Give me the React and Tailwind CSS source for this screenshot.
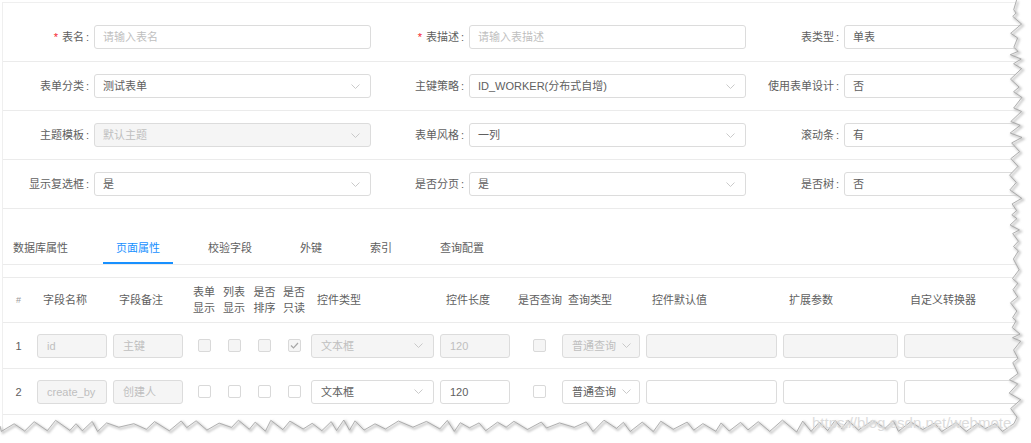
import React from "react";

const Chevron = () => (
  <svg width="9" height="5" viewBox="0 0 9 5" className="shrink-0">
    <path d="M0.5 0.5 L4.5 4.5 L8.5 0.5" fill="none" stroke="#c4c4c4" strokeWidth="0.9" />
  </svg>
);

function Field({ label, required, value, placeholder, select, disabled }) {
  return (
    <div className="flex items-center w-[375px] shrink-0">
      <div className="w-[91px] shrink-0 text-right pr-[5px] text-[#606060] whitespace-nowrap">
        {required && <span className="text-[#f5222d] mr-[4px]">*</span>}
        {label}
        <span className="ml-[2px]">:</span>
      </div>
      <div
        className={`w-[277px] shrink-0 h-[24px] rounded-[3px] border border-[#dcdcdc] flex items-center pl-[8px] pr-[10px] ${
          disabled ? "bg-[#f5f5f5]" : "bg-white"
        }`}
      >
        <span
          className={`flex-1 whitespace-nowrap ${
            value ? (disabled ? "text-[#bfbfbf]" : "text-[#606060]") : "text-[#bfbfbf]"
          }`}
        >
          {value || placeholder}
        </span>
        {select && <Chevron />}
      </div>
    </div>
  );
}

function Input({ w, value, disabled, select, pr }) {
  return (
    <div
      className={`h-[24px] shrink-0 rounded-[3px] border border-[#dcdcdc] flex items-center gap-[4px] pl-[9px] ${pr || (select ? "pr-[10px]" : "pr-[3px]")} ${
        disabled ? "bg-[#f5f5f5] text-[#bfbfbf]" : "bg-white text-[#606060]"
      } ${w}`}
    >
      <span className="flex-1 whitespace-nowrap overflow-hidden">{value}</span>
      {select && <Chevron />}
    </div>
  );
}

function Check({ disabled, checked }) {
  return (
    <div
      className={`w-[13px] h-[13px] rounded-[2px] border border-[#d9d9d9] flex items-center justify-center ${
        disabled ? "bg-[#f5f5f5]" : "bg-white"
      }`}
    >
      {checked && (
        <svg width="9" height="7" viewBox="0 0 9 7">
          <path d="M1 3.5 L3.5 6 L8 1" fill="none" stroke="#a6a6a6" strokeWidth="1.2" />
        </svg>
      )}
    </div>
  );
}

const cols = [
  "w-[31px]",
  "w-[76px] px-[3px]",
  "w-[76px] px-[3px]",
  "w-[33px] pl-[3px]",
  "w-[30px]",
  "w-[31px]",
  "w-[28px]",
  "w-[129px] px-[3px]",
  "w-[76px] px-[3px]",
  "w-[46px]",
  "w-[84px] px-[3px]",
  "w-[137px] px-[3px]",
  "w-[121px] px-[3px]",
  "w-[170px] px-[3px]",
];

function Row({ cells, header }) {
  return (
    <div
      className={`flex items-center border-b border-[#ebebeb] ${header ? "h-[45px]" : "h-[46px]"}`}
    >
      {cells.map((c, i) => (
        <div key={i} className={`shrink-0 flex items-center h-full ${cols[i]}`}>
          {c}
        </div>
      ))}
    </div>
  );
}

function H({ children, center }) {
  return (
    <div
      className={`w-full text-[#606060] whitespace-nowrap leading-[16px] ${
        center ? "text-center" : "pl-[6px]"
      }`}
    >
      {children}
    </div>
  );
}

function rng(seed) {
  let s = seed;
  return () => {
    s = (s * 16807) % 2147483647;
    return (s - 1) / 2147483646;
  };
}

function TornEdge() {
  const r = rng(12345);
  const right = [];
  let y = 0;
  let flip = false;
  while (y < 420) {
    flip = !flip;
    right.push([flip ? 1016 + r() * 6 : 1009 + r() * 5, y]);
    y += 3 + r() * 8;
  }
  const bottom = [];
  let x = 1014;
  flip = false;
  while (x > 0) {
    flip = !flip;
    bottom.push([x, flip ? 420 + r() * 4 : 427 + r() * 5]);
    x -= 5 + r() * 10;
  }
  bottom.push([0, 426]);
  const all = [...right, ...bottom];
  const line = all.map((p) => `${p[0].toFixed(1)},${p[1].toFixed(1)}`).join(" ");
  const poly = `1031,0 ${line} 0,443 1031,443`;
  return (
    <svg
      className="absolute inset-0 pointer-events-none"
      width="1031"
      height="443"
      viewBox="0 0 1031 443"
    >
      <defs>
        <filter id="blur" x="-5%" y="-5%" width="110%" height="110%">
          <feGaussianBlur stdDeviation="1.2" />
        </filter>
      </defs>
      <polygon points={poly} fill="#ffffff" />
      <polyline
        points={line}
        fill="none"
        stroke="#c8c8c8"
        strokeWidth="2"
        filter="url(#blur)"
        transform="translate(1.5,1.5)"
      />
      <polyline points={line} fill="none" stroke="#9e9e9e" strokeWidth="0.8" />
    </svg>
  );
}

export default function App() {
  const tabs = ["数据库属性", "页面属性", "校验字段", "外键", "索引", "查询配置"];
  const header = [
    <div className="w-full text-center text-[#9a9a9a] text-[9px]">#</div>,
    <H>字段名称</H>,
    <H>字段备注</H>,
    <H center>表单<br />显示</H>,
    <H center>列表<br />显示</H>,
    <H center>是否<br />排序</H>,
    <H center>是否<br />只读</H>,
    <H>控件类型</H>,
    <H>控件长度</H>,
    <div className="pl-[5px] text-[#606060] whitespace-nowrap">是否查询</div>,
    <H>查询类型</H>,
    <H>控件默认值</H>,
    <H>扩展参数</H>,
    <H>自定义转换器</H>,
  ];
  const ck = (d, c) => (
    <div className="w-full flex justify-center">
      <Check disabled={d} checked={c} />
    </div>
  );
  const row1 = [
    <div className="w-full text-center text-[#606060]">1</div>,
    <Input w="w-[70px]" value="id" disabled />,
    <Input w="w-[70px]" value="主键" disabled />,
    ck(true),
    ck(true),
    ck(true),
    ck(true, true),
    <Input w="w-[123px]" value="文本框" disabled select />,
    <Input w="w-[70px]" value="120" disabled />,
    <div className="pl-[20px]"><Check disabled /></div>,
    <Input w="w-[78px]" value="普通查询" disabled select pr="pr-[8px]" />,
    <Input w="w-[131px]" disabled />,
    <Input w="w-[115px]" disabled />,
    <Input w="w-[160px]" disabled />,
  ];
  const row2 = [
    <div className="w-full text-center text-[#606060]">2</div>,
    <Input w="w-[70px]" value="create_by" disabled />,
    <Input w="w-[70px]" value="创建人" disabled />,
    ck(false),
    ck(false),
    ck(false),
    ck(false),
    <Input w="w-[123px]" value="文本框" select />,
    <Input w="w-[70px]" value="120" />,
    <div className="pl-[20px]"><Check /></div>,
    <Input w="w-[78px]" value="普通查询" select pr="pr-[8px]" />,
    <Input w="w-[131px]" />,
    <Input w="w-[115px]" />,
    <Input w="w-[160px]" />,
  ];

  return (
    <div className="relative w-[1031px] h-[443px] overflow-hidden bg-white font-['Liberation_Sans','Noto_Sans_CJK_SC',sans-serif] text-[11px] leading-[16px]">
      <div className="pt-[2px] pl-[2px]">
        <div className="border-l border-t border-[#efefef] h-[430px] w-[1100px]">
          <div className="pt-[10px]">
            <div className="flex h-[49px] items-center border-b border-[#ebebeb]">
              <Field label="表名" required placeholder="请输入表名" />
              <Field label="表描述" required placeholder="请输入表描述" />
              <Field label="表类型" value="单表" />
            </div>
            <div className="flex h-[49px] items-center border-b border-[#ebebeb]">
              <Field label="表单分类" value="测试表单" select />
              <Field label="主键策略" value="ID_WORKER(分布式自增)" select />
              <Field label="使用表单设计" value="否" />
            </div>
            <div className="flex h-[49px] items-center border-b border-[#ebebeb]">
              <Field label="主题模板" value="默认主题" select disabled />
              <Field label="表单风格" value="一列" select />
              <Field label="滚动条" value="有" />
            </div>
            <div className="flex h-[49px] items-center border-b border-[#ebebeb]">
              <Field label="显示复选框" value="是" select />
              <Field label="是否分页" value="是" select />
              <Field label="是否树" value="否" />
            </div>
          </div>

          <div className="mt-[23px] border-b border-[#ebebeb]">
            <div className="flex gap-[22px] -ml-[3px]">
              {tabs.map((t, i) => (
                <div
                  key={t}
                  className={`relative h-[32px] px-[13px] flex items-center whitespace-nowrap ${
                    i === 1 ? "text-[#1890ff]" : "text-[#606060]"
                  }`}
                >
                  {t}
                  {i === 1 && (
                    <div className="absolute left-0 right-0 bottom-0 h-[2px] bg-[#1890ff]" />
                  )}
                </div>
              ))}
            </div>
          </div>

          <div className="mt-[12px] border-t border-[#ebebeb]">
            <Row cells={header} header />
            <Row cells={row1} />
            <Row cells={row2} />
          </div>
        </div>
      </div>

      <TornEdge />
      <div className="absolute left-[812px] top-[414px] text-[15px] leading-[18px] text-[#dcdcdc] font-['Liberation_Sans',sans-serif] whitespace-nowrap pointer-events-none">
        https://blog.csdn.net/webmote
      </div>
    </div>
  );
}
